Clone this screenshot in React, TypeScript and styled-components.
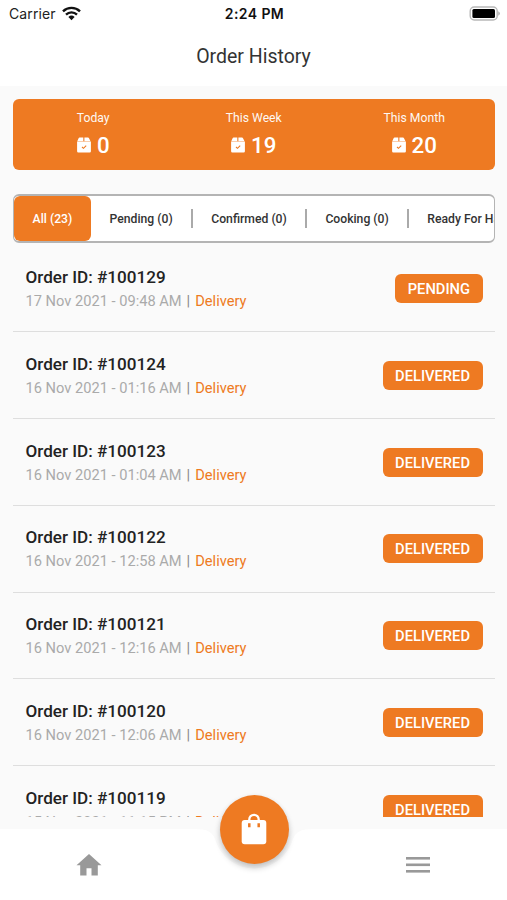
import React from "react";
import styled, { createGlobalStyle } from "styled-components";

const ORANGE = "#ee7a22";

const GlobalStyle = createGlobalStyle`
  * { box-sizing: border-box; }
  body { margin: 0; background: #fafafa; font-family: Roboto, sans-serif; }
`;

const Screen = styled.div`
  width: 507px;
  height: 900px;
  overflow: hidden;
  display: flex;
  flex-direction: column;
  background: #fafafa;
`;

const Header = styled.header`
  flex: none;
  height: 86px;
  background: #fff;
`;

const StatusBar = styled.div`
  height: 28px;
  display: grid;
  grid-template-columns: 1fr auto 1fr;
  align-items: center;
  padding: 0 7px 0 9px;
  font-family: Inter, sans-serif;
  font-size: 14px;
  line-height: 28px;
  color: #222;
`;

const Carrier = styled.div`
  display: flex;
  align-items: center;
  gap: 6px;
  letter-spacing: 0.1px;
  svg { margin-top: -2px; }
`;

const Clock = styled.div`
  font-weight: 600;
  color: #111;
  letter-spacing: 0.4px;
`;

const BatterySlot = styled.div`
  display: flex;
  justify-content: flex-end;
  margin-top: -2px;
`;

const Title = styled.h1`
  margin: 0;
  height: 56px;
  line-height: 57px;
  text-align: center;
  font-size: 19.5px;
  font-weight: 400;
  color: #333;
`;

const Summary = styled.section`
  flex: none;
  margin: 12.5px 12.5px 0 13px;
  height: 71px;
  border-radius: 6px;
  background: ${ORANGE};
  color: #fff;
  display: grid;
  grid-template-columns: repeat(3, 1fr);
`;

const Stat = styled.div`
  display: flex;
  flex-direction: column;
  align-items: center;
  padding-top: 12px;
`;

const StatLabel = styled.div`
  font-size: 12.2px;
  line-height: 15px;
  opacity: 0.95;
`;

const StatValue = styled.div`
  display: flex;
  align-items: center;
  gap: 6px;
  margin-top: 6px;
  font-size: 22.3px;
  line-height: 26px;
  font-weight: 500;
`;

const Tabs = styled.nav`
  flex: none;
  margin: 24.5px 12.5px 0 13px;
  height: 49px;
  border: 1px solid #b4b4b4;
  border-top-width: 2px;
  border-bottom-width: 2px;
  border-radius: 6px;
  background: #fff;
  display: flex;
  align-items: center;
  overflow: hidden;
`;

const Tab = styled.div<{ $active?: boolean }>`
  flex: none;
  height: 100%;
  display: flex;
  align-items: center;
  padding: 0 18.7px 0 18.6px;
  border-radius: 6px;
  white-space: nowrap;
  font-size: 12.2px;
  line-height: 14px;
  font-weight: 500;
  background: ${(p) => (p.$active ? ORANGE : "transparent")};
  color: ${(p) => (p.$active ? "#fff" : "#333")};
`;

const TabDivider = styled.span`
  flex: none;
  width: 1.3px;
  height: 19px;
  background: #aaa;
`;

const List = styled.main`
  flex: none;
  height: 571.5px;
  margin: 2.5px 12.5px 0 13px;
  overflow: hidden;
`;

const Row = styled.article`
  height: 86.75px;
  padding: 0.5px 12px 0 12.5px;
  display: flex;
  align-items: center;
  justify-content: space-between;
  border-bottom: 1px solid #dedede;
`;

const OrderName = styled.div`
  font-size: 17.1px;
  line-height: 20px;
  font-weight: 500;
  color: #222;
`;

const OrderMeta = styled.div`
  display: flex;
  margin-top: 6px;
  font-size: 14.65px;
  line-height: 17px;
  color: #aaa;
`;

const Pipe = styled.span`
  margin: 0 5.2px 0 4.8px;
  color: #888;
`;

const Kind = styled.span`
  color: ${ORANGE};
`;

const Badge = styled.div`
  height: 29px;
  padding: 0 12.5px;
  border-radius: 6px;
  background: ${ORANGE};
  color: #fff;
  font-size: 14.7px;
  line-height: 30px;
  font-weight: 500;
`;

const BottomBar = styled.footer`
  position: relative;
  flex: none;
  margin-top: 12.2px;
  height: 71px;
  background: #fff;
  display: grid;
  grid-template-columns: 178px 1fr 178px;
  align-items: center;
  justify-items: center;
  color: #999;
`;

const Notch = styled.svg`
  position: absolute;
  left: 194px;
  top: 0;
`;

const Fab = styled.button`
  position: absolute;
  left: 219.5px;
  top: -34.5px;
  width: 69px;
  height: 69px;
  padding: 0;
  border: 0;
  border-radius: 50%;
  background: ${ORANGE};
  display: flex;
  align-items: center;
  justify-content: center;
  box-shadow: 0 4px 6px rgba(0, 0, 0, 0.2), 0 1px 5px rgba(0, 0, 0, 0.06);
`;

const WifiIcon = () => (
  <svg width="19" height="15" viewBox="0 0 19 15" fill="none" stroke="#111" strokeWidth="2.4">
    <path d="M1 5.3a12.3 12.3 0 0 1 17 0" />
    <path d="M4 8.6a8 8 0 0 1 11 0" />
    <path d="M6.4 11a4.5 4.5 0 0 1 6.2 0L9.5 14.2z" fill="#111" stroke="none" />
  </svg>
);

const BatteryIcon = () => (
  <svg width="31" height="15" viewBox="0 0 31 15">
    <rect x="1.2" y="1" width="27" height="13" rx="4" fill="#fff" stroke="#b8b8b8" strokeWidth="1.4" />
    <rect x="3.4" y="3" width="22.6" height="9" rx="1.5" fill="#000" />
    <path d="M29.3 5.3q1.5.7 1.5 2.2t-1.5 2.2z" fill="#aaa" />
  </svg>
);

const PackageIcon = () => (
  <svg width="14" height="16" viewBox="0 0 14 16">
    <path d="M2.6.4H6.3V4.2H.3L1.6 1.2Q1.9.4 2.6.4zM7.4.4H11q.7 0 1 .8L13.5 4.2H7.4z" fill="#fff" />
    <path d="M.1 4.6h13.8v9.7q0 1.2-1.2 1.2H1.3Q.1 15.5.1 14.3z" fill="#fff" />
    <path d="M5 10l1.5 1.3L9.2 8.7" fill="none" stroke={ORANGE} strokeWidth="1.1" />
  </svg>
);

const BagIcon = () => (
  <svg width="26" height="32" viewBox="0 0 26 32">
    <path d="M8.3 9V6.5a4.7 4.7 0 0 1 9.4 0V9" fill="none" stroke="#fff" strokeWidth="2.3" />
    <rect x="0.7" y="7" width="24.6" height="24.3" rx="3" fill="#fff" />
    <path d="M8.3 10.2v4M17.7 10.2v4" stroke={ORANGE} strokeWidth="2.5" />
  </svg>
);

const HomeIcon = () => (
  <svg width="26" height="22" viewBox="0 0 26 22" fill="#999">
    <path d="M13 0l12.5 11.3h-3.7V21.5h-6.3v-7.2h-5v7.2H4.2V11.3H.5z" />
  </svg>
);

const MenuIcon = () => (
  <svg width="24" height="18" viewBox="0 0 24 18" fill="#999">
    <rect y="1" width="24" height="2.6" />
    <rect y="7.5" width="24" height="2.6" />
    <rect y="14" width="24" height="2.6" />
  </svg>
);

const stats = [
  { label: "Today", value: 0 },
  { label: "This Week", value: 19 },
  { label: "This Month", value: 20 },
];

const tabs = ["All (23)", "Pending (0)", "Confirmed (0)", "Cooking (0)", "Ready For Handover (0)"];

const orders = [
  { id: 100129, date: "17 Nov 2021 - 09:48 AM", status: "PENDING" },
  { id: 100124, date: "16 Nov 2021 - 01:16 AM", status: "DELIVERED" },
  { id: 100123, date: "16 Nov 2021 - 01:04 AM", status: "DELIVERED" },
  { id: 100122, date: "16 Nov 2021 - 12:58 AM", status: "DELIVERED" },
  { id: 100121, date: "16 Nov 2021 - 12:16 AM", status: "DELIVERED" },
  { id: 100120, date: "16 Nov 2021 - 12:06 AM", status: "DELIVERED" },
  { id: 100119, date: "15 Nov 2021 - 11:15 PM", status: "DELIVERED" },
];

export default function App() {
  return (
    <Screen>
      <GlobalStyle />
      <Header>
        <StatusBar>
          <Carrier>Carrier <WifiIcon /></Carrier>
          <Clock>2:24 PM</Clock>
          <BatterySlot><BatteryIcon /></BatterySlot>
        </StatusBar>
        <Title>Order History</Title>
      </Header>
      <Summary>
        {stats.map((s) => (
          <Stat key={s.label}>
            <StatLabel>{s.label}</StatLabel>
            <StatValue><PackageIcon />{s.value}</StatValue>
          </Stat>
        ))}
      </Summary>
      <Tabs>
        {tabs.map((t, i) => (
          <React.Fragment key={t}>
            {i > 1 && <TabDivider />}
            <Tab $active={i === 0}>{t}</Tab>
          </React.Fragment>
        ))}
      </Tabs>
      <List>
        {orders.map((o) => (
          <Row key={o.id}>
            <div>
              <OrderName>Order ID: #{o.id}</OrderName>
              <OrderMeta>{o.date}<Pipe>|</Pipe><Kind>Delivery</Kind></OrderMeta>
            </div>
            <Badge>{o.status}</Badge>
          </Row>
        ))}
      </List>
      <BottomBar>
        <Notch width="120" height="46" viewBox="0 0 120 46">
          <path d="M0 0C14 0 18 3 21 10A40.5 40.5 0 0 0 99 10C102 3 106 0 120 0Z" fill="#fafafa" />
        </Notch>
        <HomeIcon />
        <span />
        <MenuIcon />
        <Fab aria-label="Orders"><BagIcon /></Fab>
      </BottomBar>
    </Screen>
  );
}
